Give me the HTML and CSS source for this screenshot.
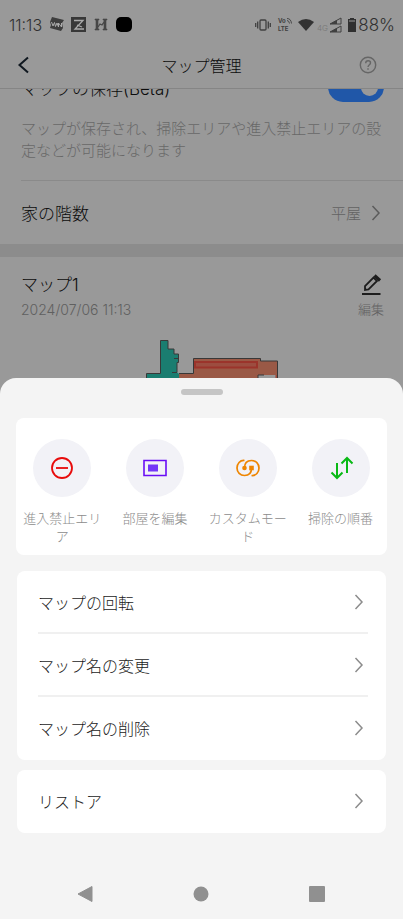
FILE: index.html
```html
<!DOCTYPE html>
<html lang="ja">
<head>
<meta charset="utf-8">
<meta name="viewport" content="width=device-width, initial-scale=1">
<title>マップ管理</title>
<link rel="stylesheet" href="styles.css">
</head>
<body>
<div class="screen">
  <div class="page">
    <div class="status">
      <div class="status-left">
        <span class="clock">11:13</span>
        <svg class="app-icons" width="84" height="18" viewBox="0 0 84 18" aria-hidden="true">
          <path d="M2 1l12 3-2 3 1 5-2 3-11-3 1-3-1-3z" fill="#3d3d3d"/>
          <path d="M1.500 6l1.500 4 1.500-3.500 1 4 1.500-3.500 1.500 4V7l3 4V7" fill="none" stroke="#aaa" stroke-width="1"/>
          <rect x="21" y="1" width="15" height="15" fill="#383838"/>
          <path d="M24 4.500h9l-8 8.500h9M27 9l5 2" fill="none" stroke="#aaa" stroke-width="1.300"/>
          <path d="M45 3h4v1h-1v9h1v1h-4v-1h1V4h-1zM53 3h4v1h-1v9h1v1h-4v-1h1V4h-1z" fill="#484848" stroke="#484848" stroke-width=".6"/>
          <path d="M48 11l2-3 2 1 3-4" fill="none" stroke="#484848" stroke-width="1.300"/>
          <rect x="66" y="1" width="16" height="15" rx="5" fill="#000"/>
        </svg>
      </div>
      <div class="status-right">
        <svg width="103" height="18" viewBox="0 0 103 18" aria-hidden="true">
          <g fill="none" stroke="#404040" stroke-width="1.300">
            <rect x="5" y="4" width="6" height="10" rx="1"/>
            <path d="M2.700 5.500v7M.7 7v4M13.300 5.500v7M15.300 7v4"/>
          </g>
          <g fill="#404040" font-family="Inter, sans-serif" font-size="6" font-weight="700">
            <text x="23" y="7">Vo</text><text x="23" y="15">LTE</text>
          </g>
          <path d="M32 4.500q2 0 2.500 3M32 2.500q4 0 4.500 5" fill="none" stroke="#404040" stroke-width=".9"/>
          <path d="M43 6q8-6 16 0l-8 9z" fill="#333"/>
          <text x="62" y="15" fill="#777" font-family="Inter, sans-serif" font-size="8">4G</text>
          <path d="M75 8l11-6v6zM75 16l11-6v6z" fill="none" stroke="#404040"/>
          <path d="M75 8l7-4v4zM75 16l7-4v4z" fill="#404040"/>
          <path d="M95 2h4v1h2v13h-8V3h2z" fill="#303030"/>
          <path d="M94 5h6" stroke="#999" stroke-width="1"/>
        </svg>
        <span class="battery">88%</span>
      </div>
    </div>

    <header class="header">
      <button class="icon-button" aria-label="戻る">
        <svg width="14" height="18" viewBox="0 0 14 18"><path d="M11 1.500L2.500 9l8.500 7.500" fill="none" stroke="#101820" stroke-width="2"/></svg>
      </button>
      <h1>マップ管理</h1>
      <button class="icon-button" aria-label="ヘルプ">
        <svg width="18" height="18" viewBox="0 0 18 18" fill="none" stroke="#666" stroke-width="1.400"><circle cx="9" cy="9" r="7.700"/><path d="M6.700 7.200c0-3.400 4.800-3.100 4.800-.3C11.500 8.700 9 8.700 9 11"/><path d="M9 12.200v1.500"/></svg>
      </button>
    </header>

    <main class="content">
      <div class="row save-row">
        <label for="save">マップの保存(Beta)</label>
        <input class="toggle" id="save" type="checkbox" role="switch" checked>
      </div>
      <p class="description">マップが保存され、掃除エリアや進入禁止エリアの設定などが可能になります</p>
      <button class="row floor-row">
        <span>家の階数</span>
        <span class="value">平屋
          <svg width="10" height="16" viewBox="0 0 10 16"><path d="M1.500 1L8 8l-6.500 7" fill="none" stroke="#5c5c5c" stroke-width="1.500"/></svg>
        </span>
      </button>
      <section class="map">
        <div class="map-head">
          <div>
            <h2>マップ1</h2>
            <time datetime="2024-07-06T11:13">2024/07/06 11:13</time>
          </div>
          <button class="edit">
            <svg width="22" height="22" viewBox="0 0 22 22" fill="none" stroke="#1d1d1d" stroke-width="1.800"><path d="M2 20h18.500" stroke-width="2"/><path d="M5 16v-4l8.500-8.500 3.500 3.500-8.500 8.500z"/><path d="M14.500 1.500L20 6.500" stroke-width="3.200"/></svg>
            <span>編集</span>
          </button>
        </div>
        <svg class="plan" width="157" height="64" viewBox="0 0 157 64" role="img" aria-label="間取り">
          <path d="M23.500 64V37.500h14v-33H45V13h6v5h4.500v8.500H54V36l2 2v26z" fill="#1a7d70"/>
          <path d="M56 64V37.500h14.500v-15h67V25h17v39z" fill="#9a5946"/>
          <path d="M135 39h18v25h-18z" fill="#999"/>
          <path d="M153 39v25" stroke="#a03a2d"/>
          <path d="M72 26h62v5.500H72z" fill="#9c4d40" stroke="#9b342b" stroke-width="2"/>
          <path d="M23.500 64V37.500h14v-33H45V13h6v5h4.500v8.500H54v9.500M51 22.500h4M49 36.500h5M56 37.500h14.500v-15h67V25h17v39M135 44v-5h6" fill="none" stroke="#383838"/>
        </svg>
      </section>
    </main>
  </div>

  <div class="sheet" role="dialog" aria-label="マップ編集">
    <div class="handle"></div>
    <div class="card actions">
      <button class="action">
        <span class="disc"><svg width="26" height="26" viewBox="0 0 26 26" fill="none" stroke="#e80b0b" stroke-width="1.800"><circle cx="13" cy="13" r="10"/><path d="M7 13h12"/></svg></span>
        <span class="caption">進入禁止エリア</span>
      </button>
      <button class="action">
        <span class="disc"><svg width="26" height="26" viewBox="0 0 26 26" fill="none"><path d="M2 5.500h22v15H2z" stroke="#6a0df5" stroke-width="1.600"/><path d="M6 9.500h10v7H6z" fill="#7436f7"/></svg></span>
        <span class="caption">部屋を編集</span>
      </button>
      <button class="action">
        <span class="disc"><svg width="26" height="26" viewBox="0 0 26 26" fill="none" stroke="#ee8500" stroke-width="1.700"><path d="M9.500 5.500C5 5 2 8.800 2 13s3.200 7.500 7.500 7.500c5 0 7-3.500 7-7.500"/><path d="M16.500 20.500C21 21 24 17.200 24 13s-3.200-7.500-7.500-7.500c-5 0-7 3.500-7 7.500"/><circle cx="9.500" cy="13" r="2.300" fill="#ee8500" stroke="none"/><path d="M14.200 10.700h4.600v4.600h-4.600z" fill="#ee8500" stroke="none"/></svg></span>
        <span class="caption">カスタムモード</span>
      </button>
      <button class="action">
        <span class="disc"><svg width="26" height="26" viewBox="0 0 26 26" fill="none" stroke="#09b915" stroke-width="2"><path d="M9 8v15M3.500 17.500L9 23l5.500-5.500M19 18V3M13.500 8.500L19 3l5.500 5.500"/></svg></span>
        <span class="caption">掃除の順番</span>
      </button>
    </div>
    <div class="card list">
      <button class="item">マップの回転<svg width="10" height="16" viewBox="0 0 10 16"><path d="M1.500 1L8 8l-6.500 7"/></svg></button>
      <button class="item">マップ名の変更<svg width="10" height="16" viewBox="0 0 10 16"><path d="M1.500 1L8 8l-6.500 7"/></svg></button>
      <button class="item">マップ名の削除<svg width="10" height="16" viewBox="0 0 10 16"><path d="M1.500 1L8 8l-6.500 7"/></svg></button>
    </div>
    <div class="card list restore">
      <button class="item">リストア<svg width="10" height="16" viewBox="0 0 10 16"><path d="M1.500 1L8 8l-6.500 7"/></svg></button>
    </div>
    <nav class="system-nav">
      <button aria-label="戻る"><svg width="18" height="18" viewBox="0 0 18 18"><path d="M16 1.500v15L2 9z" fill="#909090" stroke="#909090" stroke-linejoin="round"/></svg></button>
      <button aria-label="ホーム"><svg width="18" height="18" viewBox="0 0 18 18"><circle cx="9" cy="9" r="7.500" fill="#909090"/></svg></button>
      <button aria-label="履歴"><svg width="18" height="18" viewBox="0 0 18 18"><rect x="1" y="1" width="16" height="16" rx="1" fill="#909090"/></svg></button>
    </nav>
  </div>
</div>
</body>
</html>
```
FILE: styles.css
```css
* { box-sizing: border-box; }

body {
  margin: 0;
  background: #999;
  color: #0c0c0c;
  font-family: Inter, "Noto Sans CJK JP", sans-serif;
  font-size: 16px;
  font-weight: 300;
}

button {
  margin: 0;
  padding: 0;
  border: 0;
  background: none;
  color: inherit;
  font: inherit;
  text-align: left;
}

svg { display: block; flex: none; }

h1, h2, p { margin: 0; font-weight: 300; }

.screen {
  display: flex;
  flex-direction: column;
  height: 100vh;
}

.page {
  display: flex;
  flex: 1;
  flex-direction: column;
  min-height: 0;
  overflow: hidden;
}

.status {
  display: flex;
  flex: none;
  align-items: center;
  justify-content: space-between;
  height: 44px;
  padding: 6px 8px 0 9px;
  color: #303030;
}

.status-left, .status-right { display: flex; align-items: center; }
.status-left { gap: 8px; }
.clock { font-size: 16px; }
.battery { font-size: 17px; }

.header {
  display: grid;
  flex: none;
  grid-template-columns: 1fr auto 1fr;
  align-items: center;
  height: 45px;
  padding: 0 26px 2px 17px;
  border-bottom: 1px solid #858585;
}

.header h1 { padding-left: 9px; font-size: 16px; }
.icon-button { width: 18px; }
.icon-button:last-child { justify-self: end; }

.content { flex: 1; min-height: 0; overflow: hidden; }

.row {
  display: flex;
  align-items: center;
  justify-content: space-between;
  width: 100%;
  padding: 0 19px 0 21px;
  font-size: 17px;
}

.save-row { height: 30px; margin-top: -17px; }

.toggle {
  display: flex;
  align-items: center;
  justify-content: flex-end;
  width: 56px;
  height: 30px;
  margin: 0;
  padding: 0 6px;
  border-radius: 15px;
  background: #2057a8;
  appearance: none;
}

.toggle::before {
  width: 17px;
  height: 17px;
  border-radius: 50%;
  background: #999;
  content: "";
}

.description {
  margin-left: 21px;
  padding: 16px 19px 18px 0;
  border-bottom: 1px solid #8a8a8a;
  color: #686868;
  font-size: 15px;
  line-height: 22px;
}

.floor-row { height: 63px; }

.value {
  display: flex;
  align-items: center;
  gap: 10px;
  padding-right: 3px;
  color: #626262;
  font-size: 15px;
}

.map { border-top: 13px solid #8c8c8c; }

.map-head {
  display: flex;
  justify-content: space-between;
  padding: 16px 19px 0 21px;
}

.map-head h2 { font-size: 17px; line-height: 24px; }
.map-head time { display: block; color: #606060; font-size: 14px; line-height: 26px; }

.edit {
  display: flex;
  flex-direction: column;
  align-items: center;
  color: #626262;
  font-size: 13px;
  line-height: 26px;
}

.edit svg { margin-top: 1px; }
.plan { margin: 13px auto 0; }

.sheet {
  position: relative;
  flex: none;
  margin-top: -14px;
  padding-top: 11px;
  border-radius: 16px 16px 0 0;
  background: #f4f4f4;
}

.handle {
  width: 42px;
  height: 6px;
  margin: 0 auto 23px;
  border-radius: 3px;
  background: #c5c5c5;
}

.card { border-radius: 8px; background: #fff; }

.actions {
  display: grid;
  grid-template-columns: repeat(4, 1fr);
  margin: 0 16px 16px;
  padding: 21px 0 10px;
}

.action {
  display: flex;
  flex-direction: column;
  align-items: center;
  gap: 12px;
  padding: 0 6px;
}

.disc {
  display: flex;
  align-items: center;
  justify-content: center;
  width: 58px;
  height: 58px;
  border-radius: 50%;
  background: #f2f2f7;
}

.caption {
  color: #8c8c8c;
  font-size: 13px;
  line-height: 18px;
  text-align: center;
}

.list { margin: 0 17px 10px; padding: 0 18px 0 21px; }

.item {
  display: flex;
  align-items: center;
  justify-content: space-between;
  width: 100%;
  height: 63px;
  padding-right: 4px;
  border-bottom: 2px solid #f0f0f0;
  color: #1a1a1a;
}

.item:last-child { border-color: transparent; }
.item path { fill: none; stroke: #8c8c8c; stroke-width: 1.5; }
.restore { margin-bottom: 36px; }

.system-nav {
  display: flex;
  align-items: center;
  justify-content: space-between;
  height: 50px;
  padding: 0 77px 0 76px;
}
```
